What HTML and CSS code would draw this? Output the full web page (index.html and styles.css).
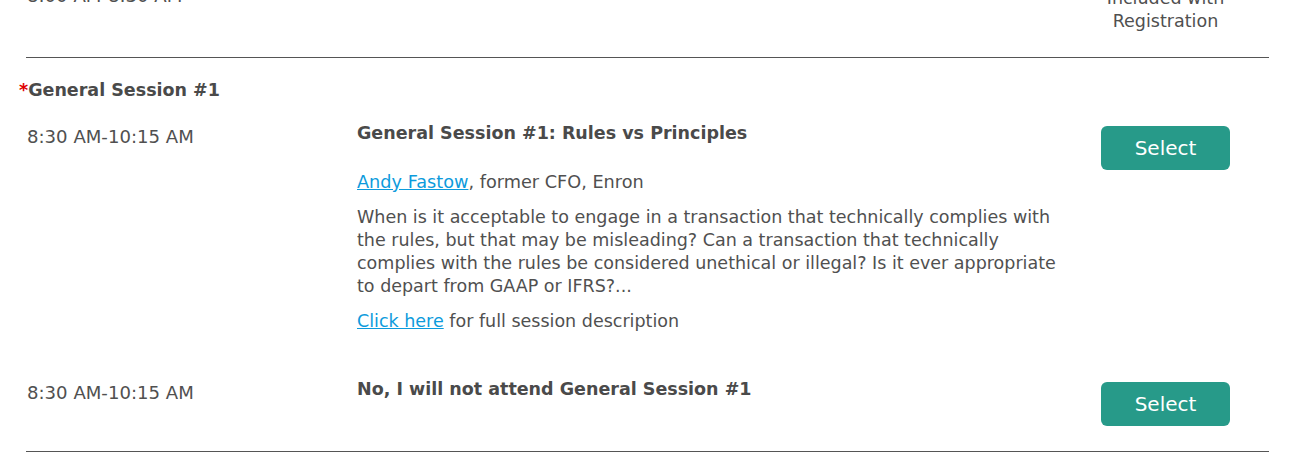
FILE: index.html
```html
<!DOCTYPE html>
<html lang="en">
<head>
<meta charset="utf-8">
<title>Sessions</title>
<link rel="stylesheet" href="styles.css">
</head>
<body>
<div class="page">
  <div class="session-row prev-row">
    <div class="time">8:00 AM-8:30 AM</div>
    <div class="details"></div>
    <div class="action"><div class="included">Included with<br>Registration</div></div>
  </div>
  <div class="divider"></div>

  <h3 class="group-title"><span class="req">*</span>General Session #1</h3>

  <div class="session-row">
    <div class="time">8:30 AM-10:15 AM</div>
    <div class="details">
      <h4 class="session-title">General Session #1: Rules vs Principles</h4>
      <p class="speaker"><a href="#">Andy Fastow</a>, former CFO, Enron</p>
      <p class="desc">When is it acceptable to engage in a transaction that technically complies with the rules, but that may be misleading? Can a transaction that technically complies with the rules be considered unethical or illegal? Is it ever appropriate to depart from GAAP or IFRS?...</p>
      <p class="more"><a href="#">Click here</a> for full session description</p>
    </div>
    <div class="action"><button class="select-btn">Select</button></div>
  </div>

  <div class="session-row last-row">
    <div class="time">8:30 AM-10:15 AM</div>
    <div class="details">
      <h4 class="session-title no-gap">No, I will not attend General Session #1</h4>
    </div>
    <div class="action"><button class="select-btn">Select</button></div>
  </div>
  <div class="divider"></div>
</div>
</body>
</html>
```

FILE: styles.css
```css
html, body {
  margin: 0;
  padding: 0;
  background: #ffffff;
}

body {
  font-family: "DejaVu Sans", Verdana, sans-serif;
  font-size: 17.5px;
  line-height: 23px;
  color: #505050;
}

.page {
  margin: -19px 43px 0 26px;
}

.session-row {
  display: grid;
  grid-template-columns: 331px 717px 1fr;
  padding-bottom: 25px;
}

.session-row.prev-row {
  padding-bottom: 24px;
}

.time {
  padding-top: 3px;
  padding-left: 1px;
  font-size: 18.1px;
}

.details {
  min-width: 0;
}

.action {
  display: flex;
  justify-content: center;
  align-items: flex-start;
  padding-right: 12px;
}

.included {
  padding-top: 6px;
  text-align: center;
}

.divider {
  height: 1px;
  background: #555555;
}

.group-title {
  margin: 21px 0 20px -7px;
  font-size: 17.5px;
  line-height: 23px;
  font-weight: bold;
  color: #4a4a4a;
}

.req {
  color: #e00000;
}

.session-title {
  margin: 0 0 26px 0;
  font-size: 17.5px;
  line-height: 23px;
  font-weight: bold;
  color: #4a4a4a;
}

.session-title.no-gap {
  margin-bottom: 0;
}

.details p {
  margin: 0 0 12px 0;
}

.details p.speaker {
  font-size: 17.7px;
}

.details p.more {
  margin-bottom: 20px;
}

.details a {
  color: #0d9bdc;
  text-decoration: underline;
}

.select-btn {
  margin-top: 4px;
  width: 129px;
  height: 44px;
  border: none;
  border-radius: 6px;
  background: #279a89;
  color: #ffffff;
  font-family: "DejaVu Sans", Verdana, sans-serif;
  font-size: 20px;
  line-height: 43px;
  padding: 1px 0 0 0;
  cursor: pointer;
}
```
